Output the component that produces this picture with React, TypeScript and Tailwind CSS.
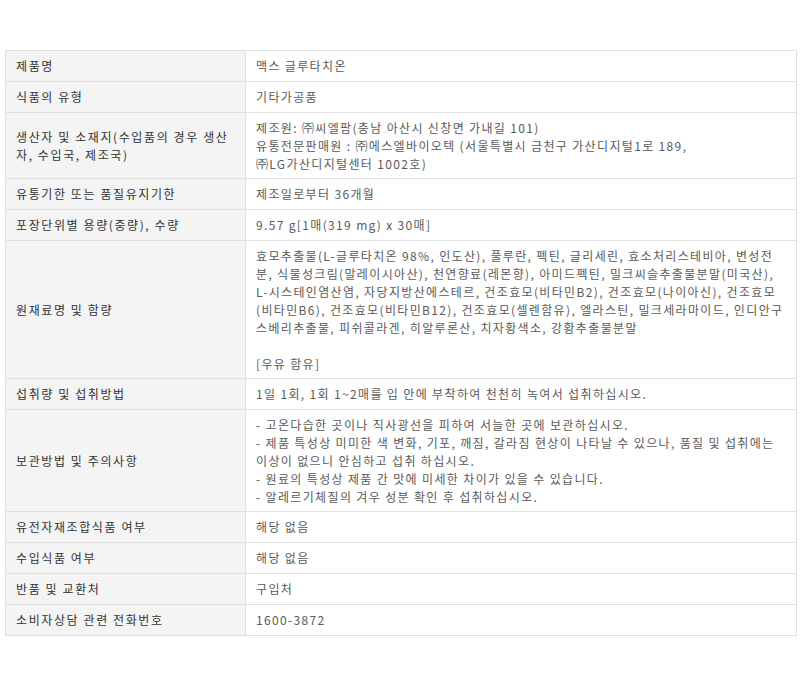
import { FC } from "react";

type Row = {
  label: string[];
  value: string[];
};

const Lines: FC<{ lines: string[] }> = ({ lines }) => (
  <div>
    {lines.map((line, i) => (
      <div key={i} className="h-[18px] whitespace-nowrap">
        {line}
      </div>
    ))}
  </div>
);

const rows: Row[] = [
  { label: ["제품명"], value: ["맥스 글루타치온"] },
  { label: ["식품의 유형"], value: ["기타가공품"] },
  {
    label: ["생산자 및 소재지(수입품의 경우 생산", "자, 수입국, 제조국)"],
    value: [
      "제조원: ㈜씨엘팜(충남 아산시 신창면 가내길 101)",
      "유통전문판매원 : ㈜에스엘바이오텍 (서울특별시 금천구 가산디지털1로 189,",
      "㈜LG가산디지털센터 1002호)",
    ],
  },
  { label: ["유통기한 또는 품질유지기한"], value: ["제조일로부터 36개월"] },
  { label: ["포장단위별 용량(중량), 수량"], value: ["9.57 g[1매(319 mg) x 30매]"] },
  {
    label: ["원재료명 및 함량"],
    value: [
      "효모추출물(L-글루타치온 98%, 인도산), 풀루란, 펙틴, 글리세린, 효소처리스테비아, 변성전",
      "분, 식물성크림(말레이시아산), 천연향료(레몬향), 아미드펙틴, 밀크씨슬추출물분말(미국산),",
      "L-시스테인염산염, 자당지방산에스테르, 건조효모(비타민B2), 건조효모(나이아신), 건조효모",
      "(비타민B6), 건조효모(비타민B12), 건조효모(셀렌함유), 엘라스틴, 밀크세라마이드, 인디안구",
      "스베리추출물, 피쉬콜라겐, 히알루론산, 치자황색소, 강황추출물분말",
      "",
      "[우유 함유]",
    ],
  },
  {
    label: ["섭취량 및 섭취방법"],
    value: ["1일 1회, 1회 1~2매를 입 안에 부착하여 천천히 녹여서 섭취하십시오."],
  },
  {
    label: ["보관방법 및 주의사항"],
    value: [
      "- 고온다습한 곳이나 직사광선을 피하여 서늘한 곳에 보관하십시오.",
      "- 제품 특성상 미미한 색 변화, 기포, 깨짐, 갈라짐 현상이 나타날 수 있으나, 품질 및 섭취에는",
      "이상이 없으니 안심하고 섭취 하십시오.",
      "- 원료의 특성상 제품 간 맛에 미세한 차이가 있을 수 있습니다.",
      "- 알레르기체질의 겨우 성분 확인 후 섭취하십시오.",
    ],
  },
  { label: ["유전자재조합식품 여부"], value: ["해당 없음"] },
  { label: ["수입식품 여부"], value: ["해당 없음"] },
  { label: ["반품 및 교환처"], value: ["구입처"] },
  { label: ["소비자상담 관련 전화번호"], value: ["1600-3872"] },
];

const App: FC = () => {
  return (
    <div className="min-h-[680px] bg-white pt-[50px] pl-[5px] font-['Noto_Sans_CJK_KR','Noto_Sans',sans-serif] text-[12px] leading-[18px]">
      <div className="w-[792px] border border-[#e0e0e0]">
        {rows.map((row, i) => (
          <div
            key={i}
            className={i < rows.length - 1 ? "flex border-b border-[#e0e0e0]" : "flex"}
          >
            <div className="flex w-[240px] shrink-0 items-center border-r border-[#e0e0e0] bg-[#f4f4f4] px-[10px] tracking-[1.6px] text-[#333]">
              <Lines lines={row.label} />
            </div>
            <div
              className={
                row.value.length > 1
                  ? "flex-1 px-[10px] pt-[6px] pb-[5px] tracking-[1.35px] text-[#5a5a5a]"
                  : "flex-1 px-[10px] py-[6px] tracking-[1.35px] text-[#5a5a5a]"
              }
            >
              <Lines lines={row.value} />
            </div>
          </div>
        ))}
      </div>
    </div>
  );
};

export default App;
